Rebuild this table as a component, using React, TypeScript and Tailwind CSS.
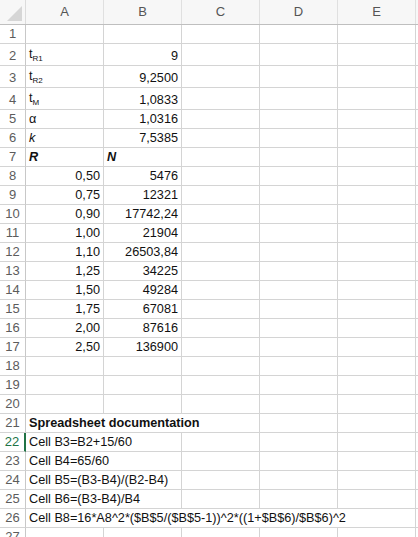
import type { ReactNode } from 'react';

type Cell = {
  content?: ReactNode;
  right?: boolean;
  span?: string;
  cls?: string;
};

type Row = {
  num: number;
  h: string;
  cells: Cell[];
};

const COLS = ['A', 'B', 'C', 'D', 'E', ''];

function Sub({ base, sub }: { base: string; sub: string }) {
  return (
    <span>
      {base}
      <span className="text-[8px] relative top-[3px]">{sub}</span>
    </span>
  );
}

const data: [string, string][] = [
  ['0,50', '5476'],
  ['0,75', '12321'],
  ['0,90', '17742,24'],
  ['1,00', '21904'],
  ['1,10', '26503,84'],
  ['1,25', '34225'],
  ['1,50', '49284'],
  ['1,75', '67081'],
  ['2,00', '87616'],
  ['2,50', '136900'],
];

const rows: Row[] = [
  { num: 1, h: 'h-[19px]', cells: [] },
  { num: 2, h: 'h-[22px]', cells: [{ content: <Sub base="t" sub="R1" /> }, { content: '9', right: true }] },
  { num: 3, h: 'h-[22px]', cells: [{ content: <Sub base="t" sub="R2" /> }, { content: '9,2500', right: true }] },
  { num: 4, h: 'h-[22px]', cells: [{ content: <Sub base="t" sub="M" /> }, { content: '1,0833', right: true }] },
  { num: 5, h: 'h-[19px]', cells: [{ content: 'α' }, { content: '1,0316', right: true }] },
  { num: 6, h: 'h-[19px]', cells: [{ content: 'k', cls: 'italic' }, { content: '7,5385', right: true }] },
  {
    num: 7,
    h: 'h-[19px]',
    cells: [
      { content: 'R', cls: 'italic font-bold' },
      { content: 'N', cls: 'italic font-bold' },
    ],
  },
  ...data.map(([a, b], i) => ({
    num: 8 + i,
    h: 'h-[19px]',
    cells: [
      { content: a, right: true },
      { content: b, right: true },
    ],
  })),
  { num: 18, h: 'h-[19px]', cells: [] },
  { num: 19, h: 'h-[19px]', cells: [] },
  { num: 20, h: 'h-[19px]', cells: [] },
  { num: 21, h: 'h-[19px]', cells: [{ content: 'Spreadsheet documentation', span: 'col-span-3', cls: 'font-bold' }] },
  { num: 22, h: 'h-[19px]', cells: [{ content: 'Cell B3=B2+15/60', span: 'col-span-2' }] },
  { num: 23, h: 'h-[19px]', cells: [{ content: 'Cell B4=65/60', span: 'col-span-2' }] },
  { num: 24, h: 'h-[19px]', cells: [{ content: 'Cell B5=(B3-B4)/(B2-B4)', span: 'col-span-2' }] },
  { num: 25, h: 'h-[19px]', cells: [{ content: 'Cell B6=(B3-B4)/B4', span: 'col-span-2' }] },
  {
    num: 26,
    h: 'h-[19px]',
    cells: [{ content: 'Cell B8=16*A8^2*($B$5/($B$5-1))^2*((1+$B$6)/$B$6)^2', span: 'col-span-5' }],
  },
  { num: 27, h: 'h-[19px]', cells: [] },
];

function spanCount(span?: string) {
  if (span === 'col-span-2') return 2;
  if (span === 'col-span-3') return 3;
  if (span === 'col-span-5') return 5;
  return 1;
}

function SheetRow({ row }: { row: Row }) {
  const filled: Cell[] = [...row.cells];
  let used = filled.reduce((n, c) => n + spanCount(c.span), 0);
  while (used < COLS.length) {
    filled.push({});
    used++;
  }
  const active = row.num === 22;
  return (
    <div className={`grid grid-cols-[26px_78px_78px_78px_78px_78px_78px] ${row.h}`}>
      <div
        className={`flex items-end justify-center pb-[2px] text-[13px] border-b border-[#d4d4d4] ${
          active ? 'border-r-2 border-r-[#217346] text-[#217346]' : 'border-r border-r-[#c8c8c8] text-[#5c5c5c]'
        }`}
      >
        {row.num}
      </div>
      {filled.map((c, i) => (
        <div
          key={i}
          className={`flex items-end pb-[2px] px-[3px] whitespace-nowrap border-r border-b border-[#d4d4d4] text-[#111] ${
            c.right ? 'justify-end' : 'justify-start'
          } ${c.span ?? ''} ${c.cls ?? ''}`}
        >
          {c.content}
        </div>
      ))}
    </div>
  );
}

export default function App() {
  return (
    <div className="w-[418px] h-[537px] overflow-hidden bg-white font-['Liberation_Sans',Arial,sans-serif] text-[12.7px] leading-[14px]">
      <div className="grid grid-cols-[26px_78px_78px_78px_78px_78px_78px] h-[25px] bg-[#f7f7f7] border-b border-[#bfbfbf]">
        <div className="relative border-r border-[#dcdcdc]">
          <svg className="absolute right-[3px] bottom-[3px]" width="15" height="15" viewBox="0 0 15 15">
            <polygon points="15,0 15,15 0,15" fill="#d6d6d6" />
          </svg>
        </div>
        {COLS.map((c, i) => (
          <div key={i} className="flex items-center justify-center border-r border-[#e0e0e0] text-[#555] text-[13px]">
            {c}
          </div>
        ))}
      </div>
      {rows.map((r) => (
        <SheetRow key={r.num} row={r} />
      ))}
    </div>
  );
}
